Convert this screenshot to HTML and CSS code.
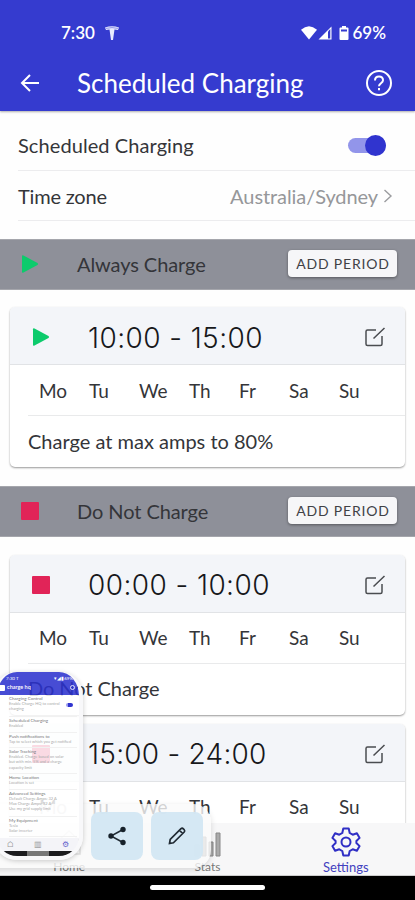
FILE: index.html
```html
<!DOCTYPE html>
<html lang="en">
<head>
<meta charset="utf-8">
<title>Scheduled Charging</title>
<link rel="stylesheet" href="styles.css">
</head>
<body>
<svg class="defs" width="0" height="0">
  <symbol id="edit" viewBox="0 0 24 24"><path d="M13 5H4.500Q3 5 3 6.500v12.500Q3 20.500 4.500 20.500H17.500q1.500 0 1.500-1.500V11M10.500 13.500 21.500 3" fill="none" stroke="#4a4c50" stroke-width="1.500"/></symbol>
  <symbol id="play" viewBox="0 0 18 20"><path d="M1 2.200Q1 .6 2.500 1.400L16.500 9q1.300 1 0 2L2.500 18.600Q1 19.400 1 17.800z" fill="#0ccb6c"/></symbol>
  <symbol id="stop" viewBox="0 0 18 18"><rect width="18" height="18" rx="1" fill="#e12458"/></symbol>
</svg>
<div class="screen">
  <header class="top">
    <div class="status">
      <span class="clock">7:30</span>
      <svg class="tesla" width="14" height="14" viewBox="0 0 14 14"><path d="M0 1.500Q7-1 14 1.500L13 4 9.500 3.500 8 14H6L4.500 3.500 1 4z" fill="#e8ebff"/><path d="M1 2.400q6-1.600 12 0" fill="none" stroke="#353bcf" stroke-width=".5"/></svg>
      <span class="grow"></span>
      <svg width="16" height="14" viewBox="0 0 16 14"><path d="M0 3.800Q8-3.200 16 3.800L8 13.500z" fill="#fff"/></svg>
      <svg class="cell" width="14" height="14" viewBox="0 0 14 14"><path d="M.5 13.500 13.500 .5v13z" fill="#fff"/><path d="M10 5.500 12.300 3v9.500H10z" fill="#353bcf"/></svg>
      <svg class="batt" width="10" height="14" viewBox="0 0 10 14"><path d="M3 0h4v1.500h1.500Q9.500 1.500 9.500 2.500V13q0 1-1 1h-7q-1 0-1-1V2.500q0-1 1-1H3z" fill="#fff"/><path d="M2 3.500h6v2H2z" fill="#353bcf"/></svg>
      <span class="pct">69%</span>
    </div>
    <div class="appbar">
      <svg class="back" width="20" height="20" viewBox="0 0 20 20"><path d="M19 10H2M10 2 2 10l8 8" fill="none" stroke="#fff" stroke-width="2"/></svg>
      <h1>Scheduled Charging</h1>
      <svg width="28" height="28" viewBox="0 0 28 28" fill="none" stroke="#fff" stroke-width="2"><circle cx="14" cy="14" r="12"/><path d="M10 11.500q0-4 4-4t4 3.700c0 3-4 3-4 6"/><path d="M14 19v2.300"/></svg>
    </div>
  </header>
  <main>
    <div class="setting"><span class="label-main">Scheduled Charging</span><span class="toggle"><i></i></span></div>
    <div class="setting zone"><span class="label-zone">Time zone</span><span class="value">Australia/Sydney</span><svg width="10" height="14" viewBox="0 0 10 14"><path d="M1.500 1 8 7l-6.500 6" fill="none" stroke="#9b9c9f" stroke-width="1.400"/></svg></div>

    <div class="band first"><svg class="play" width="18" height="20"><use href="#play"/></svg><span class="band-title always">Always Charge</span><button>ADD PERIOD</button></div>
    <section class="card">
      <div class="card-head"><svg class="play" width="18" height="20"><use href="#play"/></svg><span class="time t1">10:00 - 15:00</span><svg class="edit" width="24" height="24"><use href="#edit"/></svg></div>
      <div class="days d1"><span>Mo</span><span>Tu</span><span>We</span><span>Th</span><span>Fr</span><span>Sa</span><span>Su</span></div>
      <div class="note n1"><span>Charge at max amps to 80%</span></div>
    </section>

    <div class="band second"><svg width="18" height="18"><use href="#stop"/></svg><span class="band-title never">Do Not Charge</span><button>ADD PERIOD</button></div>
    <section class="card">
      <div class="card-head"><svg width="18" height="18"><use href="#stop"/></svg><span class="time t2">00:00 - 10:00</span><svg class="edit" width="24" height="24"><use href="#edit"/></svg></div>
      <div class="days"><span>Mo</span><span>Tu</span><span>We</span><span>Th</span><span>Fr</span><span>Sa</span><span>Su</span></div>
      <div class="note n2"><span>Do Not Charge</span></div>
    </section>
    <section class="card last">
      <div class="card-head"><svg width="18" height="18"><use href="#stop"/></svg><span class="time t3">15:00 - 24:00</span><svg class="edit" width="24" height="24"><use href="#edit"/></svg></div>
      <div class="days"><span>Mo</span><span>Tu</span><span>We</span><span>Th</span><span>Fr</span><span>Sa</span><span>Su</span></div>
    </section>
  </main>
  <nav class="tabs">
    <div class="tab"><svg width="28" height="30" viewBox="0 0 28 30"><path d="M3 14 14 4l11 10v13H3z" fill="none" stroke="#777" stroke-width="1.500"/></svg><span>Home</span></div>
    <div class="tab"><svg width="28" height="30" viewBox="0 0 28 30"><path d="M2 18h4v11H2zM9 10h4v19H9zM16 15h4v14h-4zM23 6h4v23h-4z" fill="#aaa" stroke="#888"/></svg><span>Stats</span></div>
    <div class="tab active"><svg width="30" height="30" viewBox="0 0 30 30" fill="none" stroke="#302fc5" stroke-width="2" stroke-linejoin="round"><path d="M12.300 1.500h5.400l1 4.500 3 1.700 4.200-1.500 2.700 4.700-3.200 3.100v2l3.200 3.100-2.700 4.700-4.200-1.500-3 1.700-1 4.500h-5.400l-1-4.500-3-1.700-4.200 1.500-2.700-4.700 3.200-3.100v-2l-3.200-3.100 2.700-4.700 4.200 1.500 3-1.700z"/><circle cx="15" cy="15" r="4.500"/></svg><span>Settings</span></div>
  </nav>
  <div class="gesture"><i></i></div>

  <div class="tray">
    <div class="action"><svg width="20" height="20" viewBox="0 0 20 20"><path d="M16 3.500 4 10l12 6.500" fill="none" stroke="#202a33" stroke-width="1.500"/><g fill="#17212a"><circle cx="16" cy="3.500" r="2.700"/><circle cx="4" cy="10" r="2.700"/><circle cx="16" cy="16.500" r="2.700"/></g></svg></div>
    <div class="action"><svg width="20" height="20" viewBox="0 0 20 20"><path d="M2.500 17.500 3.200 13.500 14 2.700q1.200-1 2.400.2l.8.8q1 1.200 0 2.300L6.400 16.800zM12.500 4.300l3.200 3.200" fill="none" stroke="#202a33" stroke-width="1.700"/></svg></div>
  </div>
  <div class="preview">
    <div class="mini-top"><div class="mini-status"><span>7:30 T</span><span>▾◢▮69%</span></div><div class="mini-title"><i></i><b>charge hq</b><em></em></div></div>
    <div class="mini-list">
      <div class="m1"><b>Charging Control</b><p>Enable Charge HQ to control</p><p>charging</p><i class="mini-toggle"></i></div>
      <div class="m2"><b>Scheduled Charging</b><p>Enabled</p></div>
      <div class="m3"><b>Push notifications to</b><p>Tap to select which you get notified</p></div>
      <div class="m4"><b>Solar Tracking</b><p>Enabled. Charge based on solar</p><p>but with min. 5% and a charge</p><p>capacity limit</p></div>
      <div class="m5"><b>Home Location</b><p>Location is set</p></div>
      <div class="m6"><b>Advanced Settings</b><p>Default Charge Amps: 32 A</p><p>Max Charge Amps: 32 A</p><p>Use my grid supply limit</p></div>
      <div class="m7"><b>My Equipment</b><p>Tesla</p><p>Solar inverter</p></div>
    </div>
    <div class="mini-tabs"><span>⌂</span><span>▥</span><span class="on">⚙</span></div>
    <div class="mini-base"><i></i></div>
  </div>
</div>
</body>
</html>
```
FILE: styles.css
```css
* { box-sizing: border-box; }
body { margin: 0; background: #fff; font-family: Lato, "Open Sans", sans-serif; color: #343539; }
svg { display: block; flex: none; }
.defs { position: absolute; }
.screen { position: relative; width: 415px; height: 900px; overflow: hidden; display: flex; flex-direction: column; background: #fefefe; }

.top { height: 111px; flex: none; background: #353bcf; color: #fff; box-shadow: 0 1px 2px #7779; z-index: 1; }
.status { height: 54px; padding: 11px 29px 0 61px; display: flex; align-items: center; font-size: 17px; font-weight: 600; }
.tesla { margin-left: 10px; }
.grow { flex: 1; }
.cell { margin-left: 1px; }
.batt { margin: 0 3px 0 7px; }
.appbar { height: 57px; display: flex; align-items: center; padding: 0 22px 0 20px; }
.appbar h1 { flex: 1; margin: 0 0 0 37px; font-size: 26px; line-height: 32px; font-weight: 400; white-space: nowrap; }

main { flex: 1; min-height: 0; overflow: hidden; }
.setting { height: 60px; margin-left: 18px; padding-right: 29px; display: flex; align-items: center; justify-content: space-between; border-bottom: 1px solid #ececee; font-size: 20px; padding-top: 9px; }
.label-main { letter-spacing: .08px; }
.label-zone { letter-spacing: -.2px; }
.setting.zone { height: 50px; padding: 0 22px 0 0; }
.value { margin-left: auto; margin-right: 5px; color: #96979a; letter-spacing: -.08px; }
.toggle { width: 38px; height: 15px; display: flex; align-items: center; justify-content: flex-end; background: #9295ea; border-radius: 8px; }
.toggle i { flex: none; width: 21px; height: 21px; border-radius: 50%; background: #3034cf; }

.band { height: 51px; margin: 18px 0 17px; padding: 0 18px 2px 21px; display: flex; align-items: center; background: #8e9099; border-top: 1px solid #a5a6ac; border-bottom: 1px solid #a5a6ac; font-size: 20px; }
.band.second { margin: 19px 0 18px; }
.band-title { flex: 1; margin-left: 38px; letter-spacing: -.08px; }
.band button { width: 109px; height: 27px; border: 0; border-radius: 4px; padding: 0 0 0 1px; background: #f6f6f8; color: #404146; font: 400 14px/25px Lato, sans-serif; letter-spacing: .8px; box-shadow: 0 1px 3px #0006; }

.card { margin: 0 10px; height: 160px; border-radius: 5px; overflow: hidden; background: #fff; box-shadow: 0 1px 2px #0006; }
.card-head { height: 58px; padding: 3px 18px 0 22px; display: flex; align-items: center; background: #f3f5f9; border-bottom: 1px solid #e1e3e6; }
.time { flex: 1; margin-left: 38px; font: 300 28px/34px Inter, sans-serif; white-space: nowrap; color: #17181b; letter-spacing: .43px; }
.t1 { padding-top: 1px; }
.t3 { letter-spacing: .25px; }
.card.last { margin-top: 9px; }
.days { height: 51px; margin-left: 18px; padding: 0 0 1px 11px; display: grid; grid-template-columns: repeat(7, 50px); align-items: center; border-bottom: 1px solid #e9eaeb; font-size: 19px; }
.d1 { padding-bottom: 0; }
.note { height: 51px; padding: 0 0 2px 18px; display: flex; align-items: center; font-size: 20px; }
.n2 { padding-bottom: 3px; letter-spacing: -.06px; }

.tabs { height: 53px; flex: none; display: grid; grid-template-columns: repeat(3, 1fr); background: #f7f7f8; z-index: 1; border-bottom: 1px solid #ccc; }
.tab { display: flex; flex-direction: column; align-items: center; padding-top: 4px; font-size: 12px; line-height: 20px; color: #777; }
.tab.active { color: #4341bf; font-size: 13px; }
.gesture { height: 24px; flex: none; background: #000; padding-top: 9px; z-index: 1; }
.gesture i { display: block; width: 115px; height: 5px; margin: 0 auto; border-radius: 3px; background: #fff; }

.tray { position: absolute; z-index: 3; left: -10px; top: 804px; width: 221px; height: 64px; padding: 8px 8px 8px 101px; border-radius: 0 18px 18px 0; background: #fafafacc; display: flex; gap: 8px; box-shadow: 0 2px 6px #0002; }
.action { width: 52px; height: 48px; border-radius: 8px; background: #d2e6f3ee; display: flex; align-items: center; justify-content: center; }

.preview { position: absolute; z-index: 4; left: -7px; top: 672px; width: 90px; height: 188px; padding: 0; border: 3px solid #f8f8fa; border-width: 0 4px 4px; border-radius: 24px; overflow: hidden; box-shadow: 0 1px 5px #0003; font-size: 4.500px; line-height: 5.200px; display: flex; flex-direction: column; }
.mini-top { height: 23px; background: #2b31cddd; color: #fff; padding-top: 4px; flex: none; }
.mini-status { display: flex; justify-content: space-between; padding: 0 6px 0 9px; }
.mini-title { display: flex; align-items: center; gap: 2px; margin-top: 3px; height: 7px; font-size: 5.500px; }
.mini-title i { width: 8px; height: 6px; background: #fff; border-radius: 1px; }
.mini-title b { font-weight: 600; }
.mini-title em { margin: 0 4px 0 auto; width: 5px; height: 5px; border: 1px solid #dfe2ff; border-radius: 50%; }
.mini-list { flex: 1; min-height: 0; overflow: hidden; padding: 0 2px 0 12px; color: #aaa; background: #ffffffd4; }
.mini-list div { position: relative; border-bottom: 1px solid #f1f1f1; white-space: nowrap; padding-top: 1px; }
.mini-list b { display: block; font-weight: 400; color: #77787b; }
.mini-list p { margin: 0; font-size: 4px; }
.m1 { height: 22px; }
.m2, .m3, .m5 { height: 15.500px; }
.m4 { height: 26px; }
.m6 { height: 27px; }
.m7 { height: 20px; }
.mini-toggle { position: absolute; right: 4px; top: 8px; width: 7px; height: 4px; border-radius: 2px; background: linear-gradient(90deg, #9899ed 35%, #3034cf 35%); }
.mini-tabs { height: 13px; flex: none; display: flex; justify-content: space-around; align-items: center; background: #f4f4f8; font-size: 8px; color: #999; }
.mini-tabs .on { color: #6462cc; }
.mini-base { height: 5px; flex: none; background: #1b1b1e; display: flex; justify-content: center; }
.mini-base i { width: 22px; background: #777; }
```
